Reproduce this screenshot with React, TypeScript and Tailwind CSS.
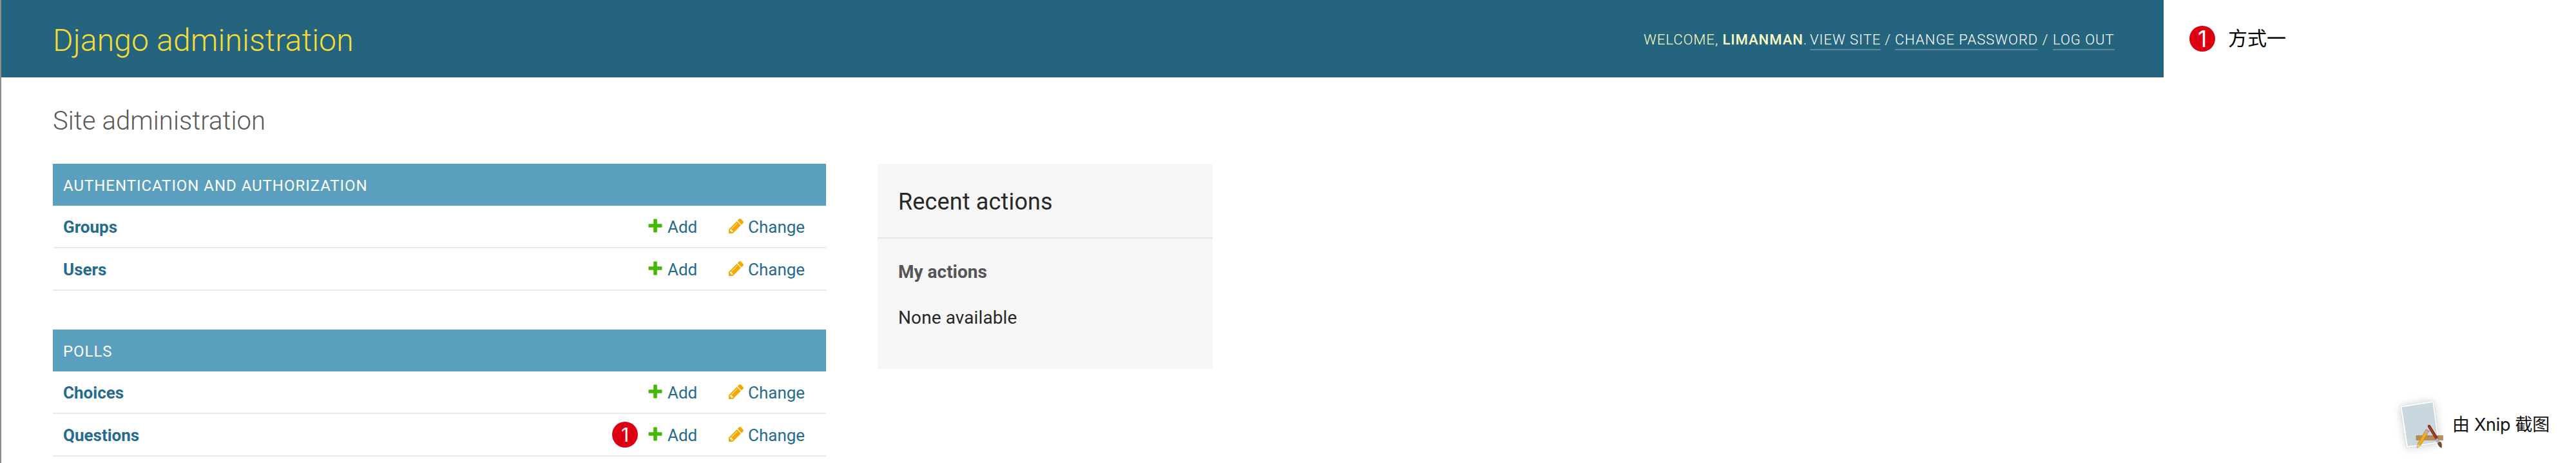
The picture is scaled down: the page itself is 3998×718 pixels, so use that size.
import React from "react";

function AddIcon() {
  return (
    <svg className="mb-[2px] size-[22px] shrink-0" viewBox="0 0 22 22" fill="#43b900">
      <path d="M9 .5h4q.8 0 .8.8v6.9h6.900q.8 0 .8.8v4q0 .8-.8.8h-6.900v6.900q0 .8-.8.8H9q-.8 0-.8-.8v-6.900H1.300q-.8 0-.8-.8V9q0-.8.8-.8h6.900V1.300q0-.8.8-.8Z" />
    </svg>
  );
}

function ChangeIcon() {
  return (
    <svg className="mb-[2px] size-[23px] shrink-0" viewBox="128 149 1515 1515" fill="#f7a800">
      <path d="M491 1536l91-91-235-235-91 91v107h128v128h107zm523-928q0-22-22-22-10 0-17 7l-542 542q-7 7-7 17 0 22 22 22 10 0 17-7l542-542q7-7 7-17zm-54-192l416 416-832 832h-416v-416zm683 96q0 53-37 90l-166 166-416-416 166-165q36-38 90-38 53 0 91 38l235 234q37 39 37 91z" />
    </svg>
  );
}

function Badge({ large }: { large?: boolean }) {
  return (
    <span
      className={
        "flex size-10 shrink-0 items-center justify-center rounded-full bg-[#dc0012] font-['Inter',sans-serif] leading-none text-white " +
        (large ? "text-[35px]" : "text-[30px]")
      }
    >
      1
    </span>
  );
}

function Row({ name, marked }: { name: string; marked?: boolean }) {
  return (
    <li className="flex h-[66px] items-center border-b-2 border-[#e9e9e9] pl-4 text-[26px] leading-none text-[#246b8d]">
      <a className="flex-1 pt-[2px] font-bold">{name}</a>
      {marked && (
        <span className="mr-4">
          <Badge />
        </span>
      )}
      <a className="flex w-[125px] items-center">
        <AddIcon />
        <span className="pt-[2px] pl-2">Add</span>
      </a>
      <a className="flex w-[151px] items-center">
        <ChangeIcon />
        <span className="pt-[2px] pl-[7px]">Change</span>
      </a>
    </li>
  );
}

function Module({ title, rows, marked }: { title: string; rows: string[]; marked?: string }) {
  return (
    <section>
      <h2 className="flex h-[65px] items-center bg-[#5a9fbd] pt-[2px] pl-4 text-2xl leading-none tracking-[0.96px] text-white">
        {title}
      </h2>
      <ul>
        {rows.map((r) => (
          <Row key={r} name={r} marked={r === marked} />
        ))}
      </ul>
    </section>
  );
}

function XnipLogo() {
  return (
    <svg className="h-[118px] w-[106px] shrink-0" viewBox="0 0 106 118">
      <defs>
        <filter id="soft" x="-40%" y="-40%" width="180%" height="180%">
          <feGaussianBlur stdDeviation="7" />
        </filter>
      </defs>
      <path d="M25 30 77 22 86 88 35 95Z" fill="#000" opacity=".2" filter="url(#soft)" />
      <path d="M25 29.500 77 21.500 86 87 35 94.500Z" fill="#fff" stroke="#d0d0d0" strokeWidth=".5" />
      <path d="M27.500 31.500 75.500 24 84 85.500 37 92Z" fill="#c9d8df" />
      <path d="M50 75.500h41.500v7H50z" fill="#b98f55" stroke="#94703f" strokeWidth=".5" />
      <path d="M54 76v2m5-2v2m5-2v2m5-2v2m5-2v2m5-2v2m5-2v2" stroke="#7d5c30" strokeWidth=".6" />
      <path d="M64.500 67 69.500 69.500 56.500 91 51.200 94.800 52 88.500Z" fill="#f2ab1c" stroke="#9c6a10" strokeWidth=".5" />
      <path d="m52 88.500 4.500 2.500-5.300 3.800Z" fill="#e8c99a" />
      <path d="m65.500 65.500 5 2.500-1.500 2.500-4.500-2.500Z" fill="#e892b4" stroke="#b9627f" strokeWidth=".5" />
      <path d="m64.500 68 4.500 2.500-1.200 2-4.500-2.500Z" fill="#a9bccb" />
      <path d="m70 61 13 21" stroke="#8a2b1a" strokeWidth="4.500" strokeLinecap="round" />
      <path d="m69.800 61 12.200 20" stroke="#c8553c" strokeWidth="1" />
      <path d="m81.500 80.500 3 5" stroke="#9db6c4" strokeWidth="4.500" />
      <path d="M83 87q3-3 5.500-1.500Q90.500 89 89.500 94.800 84.500 93 83 87Z" fill="#7a4a25" />
    </svg>
  );
}

export default function App() {
  return (
    <div className="flex h-[718px] w-[3998px] overflow-hidden bg-white font-['Roboto','Noto_Sans_CJK_SC',sans-serif]">
      <div className="w-[3358px] shrink-0 border-l-2 border-[#8e8e8e]">
        <header className="flex h-[120px] items-center justify-between bg-[#25647f] pt-[5px] pr-[76px] pl-20">
          <h1 className="text-5xl font-light tracking-[0.18px] text-[#f5dd35]">Django administration</h1>
          <div className="flex h-[30px] text-[22px] leading-[28px] font-light tracking-[1px] whitespace-pre text-[#fdffc5]">
            <span className="w-[258px]">
              WELCOME, <strong className="font-medium">LIMANMAN</strong>.
            </span>
            <a className="w-[110px] border-b-2 border-[#5686a0] text-white">VIEW SITE</a>
            <span className="w-[22px] text-center">/</span>
            <a className="w-[222px] border-b-2 border-[#5686a0] text-white">CHANGE PASSWORD</a>
            <span className="w-[23px] text-center">/</span>
            <a className="w-[96px] border-b-2 border-[#5686a0] text-white">LOG OUT</a>
          </div>
        </header>
        <main className="pl-20">
          <h2 className="h-[134px] pt-[44px] text-[40px] leading-[48px] font-light tracking-[0.08px] text-[#595959]">
            Site administration
          </h2>
          <div className="flex items-start gap-20">
            <div className="flex w-[1200px] flex-col gap-[60px]">
              <Module title="AUTHENTICATION AND AUTHORIZATION" rows={["Groups", "Users"]} />
              <Module title="POLLS" rows={["Choices", "Questions"]} marked="Questions" />
            </div>
            <aside className="h-[318px] w-[520px] bg-[#f6f6f6] text-[#282828]">
              <h2 className="flex h-[116px] items-center border-b-2 border-[#e5e5e5] pt-[3px] pl-8 text-4xl leading-none tracking-[0.15px]">
                Recent actions
              </h2>
              <h3 className="pt-[34px] pl-8 text-[28px] leading-9 font-bold text-[#555]">My actions</h3>
              <p className="pt-[35px] pl-8 text-[28px] leading-9 tracking-[0.1px]">None available</p>
            </aside>
          </div>
        </main>
      </div>
      <div className="flex flex-1 flex-col justify-between">
        <div className="flex h-[120px] items-center gap-5 pl-10 text-[30px] text-black">
          <Badge large />
          <span className="pb-px">方式一</span>
        </div>
        <div className="flex h-[118px] w-[298px] items-center self-end text-[27px] tracking-[-0.3px] whitespace-nowrap text-[#111]">
          <XnipLogo />
          <span className="font-['Inter','Noto_Sans_CJK_SC',sans-serif]">由 Xnip 截图</span>
        </div>
      </div>
    </div>
  );
}
